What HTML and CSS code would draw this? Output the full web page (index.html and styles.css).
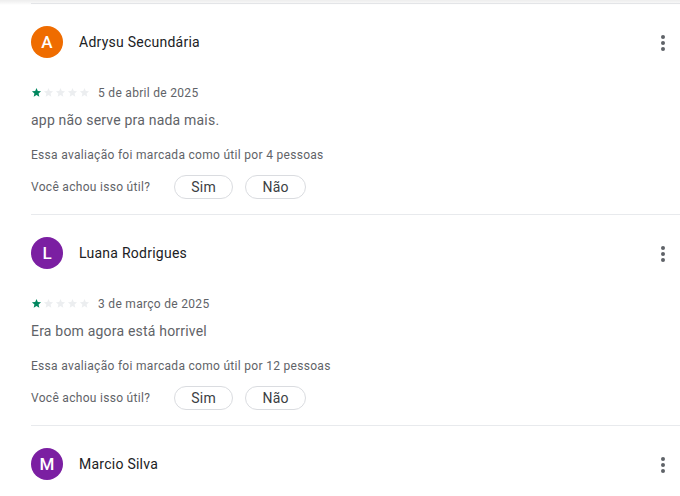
FILE: index.html
```html
<!DOCTYPE html>
<html lang="pt-BR">
<head>
<meta charset="utf-8">
<title>Avaliações</title>
<link rel="stylesheet" href="styles.css">
</head>
<body>
<div class="page">
  <div class="top-shadow"></div>
  <div class="reviews">
    <section class="review">
      <header class="review-head">
        <div class="avatar avatar-orange">A</div>
        <div class="name">Adrysu Secundária</div>
        <button class="more" aria-label="Mais opções">
          <svg viewBox="0 0 24 24" width="24" height="24"><circle cx="12" cy="6" r="2"/><circle cx="12" cy="12" r="2"/><circle cx="12" cy="18" r="2"/></svg>
        </button>
      </header>
      <div class="meta">
        <div class="stars">
          <svg class="star on" viewBox="0 0 24 24"><path d="M12 17.27L18.18 21l-1.64-7.03L22 9.24l-7.19-.61L12 2 9.19 8.63 2 9.24l5.46 4.73L5.82 21z"/></svg>
          <svg class="star" viewBox="0 0 24 24"><path d="M12 17.27L18.18 21l-1.64-7.03L22 9.24l-7.19-.61L12 2 9.19 8.63 2 9.24l5.46 4.73L5.82 21z"/></svg>
          <svg class="star" viewBox="0 0 24 24"><path d="M12 17.27L18.18 21l-1.64-7.03L22 9.24l-7.19-.61L12 2 9.19 8.63 2 9.24l5.46 4.73L5.82 21z"/></svg>
          <svg class="star" viewBox="0 0 24 24"><path d="M12 17.27L18.18 21l-1.64-7.03L22 9.24l-7.19-.61L12 2 9.19 8.63 2 9.24l5.46 4.73L5.82 21z"/></svg>
          <svg class="star" viewBox="0 0 24 24"><path d="M12 17.27L18.18 21l-1.64-7.03L22 9.24l-7.19-.61L12 2 9.19 8.63 2 9.24l5.46 4.73L5.82 21z"/></svg>
        </div>
        <span class="date">5 de abril de 2025</span>
      </div>
      <p class="text">app não serve pra nada mais.</p>
      <p class="helpful-count">Essa avaliação foi marcada como útil por 4 pessoas</p>
      <div class="helpful">
        <span class="helpful-q">Você achou isso útil?</span>
        <button class="pill pill-sim">Sim</button>
        <button class="pill pill-nao">Não</button>
      </div>
    </section>

    <section class="review">
      <header class="review-head">
        <div class="avatar avatar-purple">L</div>
        <div class="name">Luana Rodrigues</div>
        <button class="more" aria-label="Mais opções">
          <svg viewBox="0 0 24 24" width="24" height="24"><circle cx="12" cy="6" r="2"/><circle cx="12" cy="12" r="2"/><circle cx="12" cy="18" r="2"/></svg>
        </button>
      </header>
      <div class="meta">
        <div class="stars">
          <svg class="star on" viewBox="0 0 24 24"><path d="M12 17.27L18.18 21l-1.64-7.03L22 9.24l-7.19-.61L12 2 9.19 8.63 2 9.24l5.46 4.73L5.82 21z"/></svg>
          <svg class="star" viewBox="0 0 24 24"><path d="M12 17.27L18.18 21l-1.64-7.03L22 9.24l-7.19-.61L12 2 9.19 8.63 2 9.24l5.46 4.73L5.82 21z"/></svg>
          <svg class="star" viewBox="0 0 24 24"><path d="M12 17.27L18.18 21l-1.64-7.03L22 9.24l-7.19-.61L12 2 9.19 8.63 2 9.24l5.46 4.73L5.82 21z"/></svg>
          <svg class="star" viewBox="0 0 24 24"><path d="M12 17.27L18.18 21l-1.64-7.03L22 9.24l-7.19-.61L12 2 9.19 8.63 2 9.24l5.46 4.73L5.82 21z"/></svg>
          <svg class="star" viewBox="0 0 24 24"><path d="M12 17.27L18.18 21l-1.64-7.03L22 9.24l-7.19-.61L12 2 9.19 8.63 2 9.24l5.46 4.73L5.82 21z"/></svg>
        </div>
        <span class="date">3 de março de 2025</span>
      </div>
      <p class="text">Era bom agora está horrivel</p>
      <p class="helpful-count">Essa avaliação foi marcada como útil por 12 pessoas</p>
      <div class="helpful">
        <span class="helpful-q">Você achou isso útil?</span>
        <button class="pill pill-sim">Sim</button>
        <button class="pill pill-nao">Não</button>
      </div>
    </section>

    <section class="review">
      <header class="review-head">
        <div class="avatar avatar-purple">M</div>
        <div class="name">Marcio Silva</div>
        <button class="more" aria-label="Mais opções">
          <svg viewBox="0 0 24 24" width="24" height="24"><circle cx="12" cy="6" r="2"/><circle cx="12" cy="12" r="2"/><circle cx="12" cy="18" r="2"/></svg>
        </button>
      </header>
    </section>
  </div>
</div>
</body>
</html>
```

FILE: styles.css
```css
html, body {
  margin: 0;
  padding: 0;
  background: #ffffff;
}

body {
  font-family: Roboto, "Liberation Sans", Arial, sans-serif;
  color: #202124;
  overflow: hidden;
}

.page {
  position: relative;
  width: 680px;
  height: 496px;
  overflow: hidden;
}

.top-shadow {
  position: absolute;
  top: 0;
  left: 0;
  right: 0;
  height: 5px;
  background: linear-gradient(to bottom, rgba(0, 0, 0, 0.07), rgba(0, 0, 0, 0.03) 60%, rgba(0, 0, 0, 0));
  z-index: 2;
}

.reviews {
  padding-top: 3px;
  padding-left: 31px;
}

.review {
  border-top: 1px solid #e8eaed;
  padding-bottom: 16px;
}

.review-head {
  display: flex;
  align-items: center;
  height: 32px;
  margin-top: 22px;
}

.avatar {
  width: 32px;
  height: 32px;
  border-radius: 50%;
  flex: none;
  display: flex;
  align-items: center;
  justify-content: center;
  color: #ffffff;
  font-size: 17px;
  font-weight: 500;
}

.avatar-orange {
  background: #ef6c00;
}

.avatar-purple {
  background: #7b1fa2;
}

.name {
  margin-left: 16px;
  font-size: 14px;
  letter-spacing: 0.25px;
  color: #202124;
  flex: 1;
}

.more {
  border: 0;
  background: none;
  padding: 0;
  margin: 2px 5px 0 0;
  width: 24px;
  height: 24px;
  display: flex;
  align-items: center;
  justify-content: center;
  fill: #5f6368;
}

.meta {
  display: flex;
  align-items: center;
  height: 16px;
  margin-top: 26px;
}

.stars {
  display: flex;
  gap: 1px;
}

.star {
  width: 11px;
  height: 11px;
  fill: #eceef0;
}

.star.on {
  fill: #01875f;
}

.date {
  margin-left: 8px;
  font-size: 12px;
  line-height: 16px;
  letter-spacing: 0.3px;
  color: #5f6368;
  padding-top: 1px;
}

.text {
  margin: 10px 0 0;
  font-size: 14px;
  line-height: 20px;
  letter-spacing: 0.2px;
  color: #5f6368;
}

.helpful-count {
  margin: 17px 0 0;
  font-size: 12px;
  line-height: 16px;
  letter-spacing: 0.3px;
  color: #5f6368;
}

.helpful {
  display: flex;
  align-items: center;
  margin-top: 12px;
  height: 24px;
}

.helpful-q {
  font-size: 12px;
  line-height: 16px;
  letter-spacing: 0.3px;
  color: #5f6368;
  margin-right: 24px;
}

.pill {
  height: 24px;
  box-sizing: border-box;
  border: 1px solid #dadce0;
  border-radius: 12px;
  background: #ffffff;
  font-family: Roboto, "Liberation Sans", Arial, sans-serif;
  font-size: 14px;
  letter-spacing: 0.25px;
  color: #3c4043;
  padding: 0;
  display: flex;
  align-items: center;
  justify-content: center;
}

.pill-sim {
  width: 59px;
}

.pill-nao {
  width: 61px;
  margin-left: 12px;
}

.review:last-child {
  padding-bottom: 0;
}

.review + .review .helpful {
  margin-top: 12px;
}

.review {
  padding-bottom: 15px;
}
```
